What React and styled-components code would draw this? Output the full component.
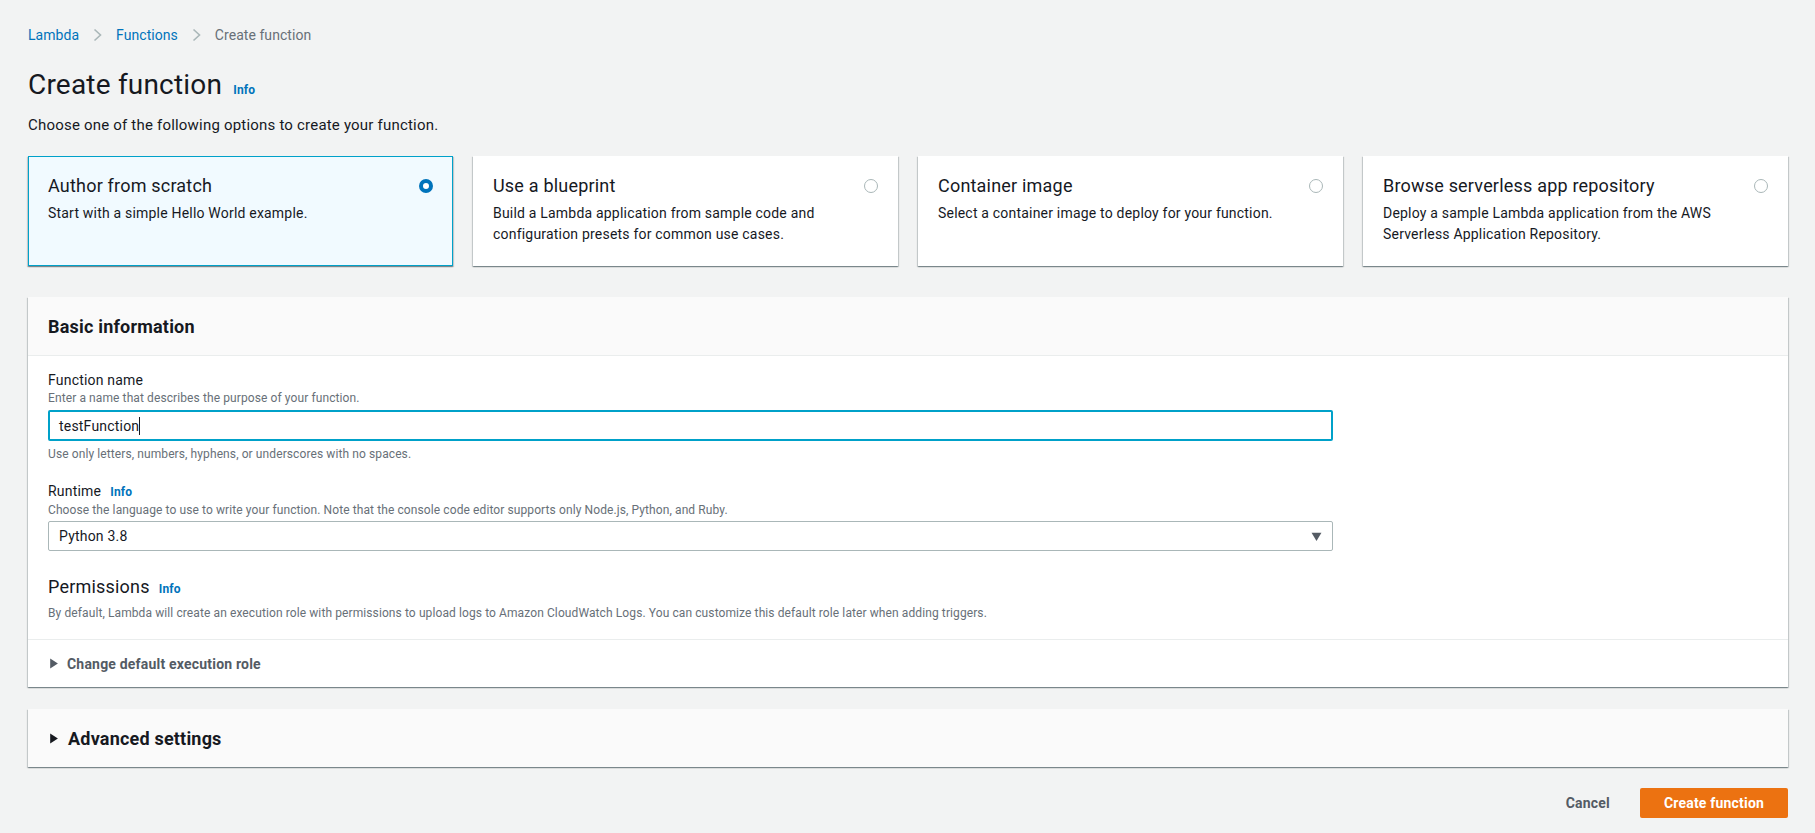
import React from "react";
import styled, { createGlobalStyle } from "styled-components";

const GlobalStyle = createGlobalStyle`
  body {
    margin: 0;
    background: #f2f3f3;
    font-family: Roboto, "Liberation Sans", Arial, sans-serif;
    letter-spacing: 0.2px;
    color: #16191f;
  }
`;

const Page = styled.div`
  padding: 24px 27px 30px 28px;
`;

const Crumbs = styled.nav`
  display: flex;
  align-items: center;
  gap: 14px;
  font-size: 14px;
  line-height: 22px;
  letter-spacing: 0.05px;
`;

const Crumb = styled.span`
  color: ${(p) => (p.current ? "#687078" : "#0073bb")};
`;

const TitleRow = styled.div`
  display: flex;
  align-items: baseline;
  gap: 11px;
  margin-top: 21px;
`;

const Title = styled.h1`
  margin: 0;
  font-size: 28px;
  font-weight: 400;
  line-height: 36px;
`;

const Info = styled.span`
  font-size: 12px;
  font-weight: 700;
  color: #0073bb;
`;

const Intro = styled.p`
  margin: 11px 0 0;
  font-size: 15px;
  line-height: 22px;
`;

const CardGrid = styled.div`
  display: grid;
  grid-template-columns: repeat(4, 1fr);
  gap: 20px;
  margin-top: 20px;
`;

const Card = styled.div`
  box-sizing: border-box;
  height: 110px;
  padding: 16px 19px;
  background: ${(p) => (p.selected ? "#f1faff" : "#fff")};
  border: 1px solid ${(p) => (p.selected ? "#00a1c9" : "transparent")};
  box-shadow: 0 1px 1px 0 rgba(0, 28, 36, 0.3),
    1px 1px 1px 0 rgba(0, 28, 36, 0.15), -1px 1px 1px 0 rgba(0, 28, 36, 0.15);
`;

const CardHead = styled.div`
  display: flex;
  justify-content: space-between;
  align-items: center;
`;

const CardTitle = styled.div`
  font-size: 18px;
  line-height: 26px;
`;

const CardText = styled.div`
  margin-top: 4px;
  font-size: 14px;
  line-height: 21px;
`;

const Radio = styled.span`
  box-sizing: border-box;
  width: 14px;
  height: 14px;
  border-radius: 50%;
  border: ${(p) => (p.checked ? "4px solid #0073bb" : "1px solid #aab7b8")};
  background: #fff;
`;

const Panel = styled.section`
  margin-top: ${(p) => p.gap || 20}px;
  background: #fff;
  box-shadow: 0 1px 1px 0 rgba(0, 28, 36, 0.3),
    1px 1px 1px 0 rgba(0, 28, 36, 0.15), -1px 1px 1px 0 rgba(0, 28, 36, 0.15);
`;

const PanelHeader = styled.div`
  display: flex;
  align-items: center;
  gap: 9px;
  height: 58px;
  padding: 0 20px;
  background: #fafafa;
  border-bottom: ${(p) => (p.open ? "1px solid #eaeded" : "none")};
  font-size: 18px;
  font-weight: 700;
`;

const PanelBody = styled.div`
  padding: 14px 20px 18px;
`;

const Field = styled.div`
  margin-top: ${(p) => p.gap || 0}px;
`;

const Label = styled.div`
  display: flex;
  align-items: baseline;
  gap: 9px;
  font-size: 14px;
  line-height: 20px;
`;

const Hint = styled.div`
  font-size: 12px;
  line-height: 16px;
  letter-spacing: 0.1px;
  color: #687078;
  margin-top: ${(p) => p.gap || 0}px;
`;

const TextBox = styled.div`
  box-sizing: border-box;
  width: 74.7%;
  height: 31px;
  margin-top: 4px;
  padding: 0 9px;
  display: flex;
  align-items: center;
  border: 2px solid #00a1c9;
  border-radius: 2px;
  font-size: 14px;
`;

const Caret = styled.span`
  width: 1px;
  height: 18px;
  background: #16191f;
`;

const Select = styled.div`
  box-sizing: border-box;
  width: 74.7%;
  height: 30px;
  margin-top: 3px;
  padding: 0 10px;
  display: flex;
  align-items: center;
  justify-content: space-between;
  border: 1px solid #aab7b8;
  border-radius: 2px;
  font-size: 14px;
`;

const SectionTitle = styled.div`
  display: flex;
  align-items: baseline;
  gap: 9px;
  margin-top: 24px;
  font-size: 18px;
  line-height: 24px;
`;

const Expander = styled.div`
  display: flex;
  align-items: center;
  gap: 8px;
  height: 47px;
  padding: 0 20px;
  border-top: 1px solid #eaeded;
  font-size: 14px;
  font-weight: 700;
  color: #545b64;
`;

const Footer = styled.div`
  display: flex;
  justify-content: flex-end;
  align-items: center;
  gap: 10px;
  margin-top: 21px;
`;

const Button = styled.button`
  height: 30px;
  padding: 0 20px;
  border: none;
  border-radius: 2px;
  font-family: inherit;
  letter-spacing: inherit;
  font-size: 14px;
  font-weight: 700;
  background: ${(p) => (p.primary ? "#ec7211" : "transparent")};
  color: ${(p) => (p.primary ? "#fff" : "#545b64")};
  min-width: ${(p) => (p.primary ? "148px" : "0")};
`;

const Chevron = () => (
  <svg width="9" height="14" viewBox="0 0 9 14">
    <path d="M1.5 1.5l6 5.5-6 5.5" fill="none" stroke="#aab7b8" strokeWidth="1.6" />
  </svg>
);

const Triangle = ({ dir = "right", color = "#545b64", size = 9 }) => (
  <svg width={size} height={size} viewBox="0 0 10 10">
    {dir === "right" ? (
      <path d="M2 0.5L9 5 2 9.5z" fill={color} />
    ) : (
      <path d="M0.5 1.5h9L5 9z" fill={color} />
    )}
  </svg>
);

const options = [
  { title: "Author from scratch", text: "Start with a simple Hello World example.", selected: true },
  {
    title: "Use a blueprint",
    text: "Build a Lambda application from sample code and configuration presets for common use cases.",
  },
  { title: "Container image", text: "Select a container image to deploy for your function." },
  {
    title: "Browse serverless app repository",
    text: "Deploy a sample Lambda application from the AWS Serverless Application Repository.",
  },
];

export default function App() {
  return (
    <>
      <GlobalStyle />
      <Page>
        <Crumbs>
          <Crumb>Lambda</Crumb>
          <Chevron />
          <Crumb>Functions</Crumb>
          <Chevron />
          <Crumb current>Create function</Crumb>
        </Crumbs>

        <TitleRow>
          <Title>Create function</Title>
          <Info>Info</Info>
        </TitleRow>
        <Intro>Choose one of the following options to create your function.</Intro>

        <CardGrid>
          {options.map((o) => (
            <Card key={o.title} selected={o.selected}>
              <CardHead>
                <CardTitle>{o.title}</CardTitle>
                <Radio checked={o.selected} />
              </CardHead>
              <CardText>{o.text}</CardText>
            </Card>
          ))}
        </CardGrid>

        <Panel gap={31}>
          <PanelHeader open>Basic information</PanelHeader>
          <PanelBody>
            <Field>
              <Label>Function name</Label>
              <Hint>Enter a name that describes the purpose of your function.</Hint>
              <TextBox>
                testFunction
                <Caret />
              </TextBox>
              <Hint gap={5}>Use only letters, numbers, hyphens, or underscores with no spaces.</Hint>
            </Field>
            <Field gap={19}>
              <Label>
                Runtime <Info>Info</Info>
              </Label>
              <Hint>
                Choose the language to use to write your function. Note that the console code editor
                supports only Node.js, Python, and Ruby.
              </Hint>
              <Select>
                Python 3.8
                <Triangle dir="down" size={11} />
              </Select>
            </Field>
            <SectionTitle>
              Permissions <Info>Info</Info>
            </SectionTitle>
            <Hint gap={4}>
              By default, Lambda will create an execution role with permissions to upload logs to
              Amazon CloudWatch Logs. You can customize this default role later when adding triggers.
            </Hint>
          </PanelBody>
          <Expander>
            <Triangle color="#545b64" size={11} />
            Change default execution role
          </Expander>
        </Panel>

        <Panel gap={22}>
          <PanelHeader>
            <Triangle color="#16191f" size={11} />
            Advanced settings
          </PanelHeader>
        </Panel>

        <Footer>
          <Button>Cancel</Button>
          <Button primary>Create function</Button>
        </Footer>
      </Page>
    </>
  );
}
